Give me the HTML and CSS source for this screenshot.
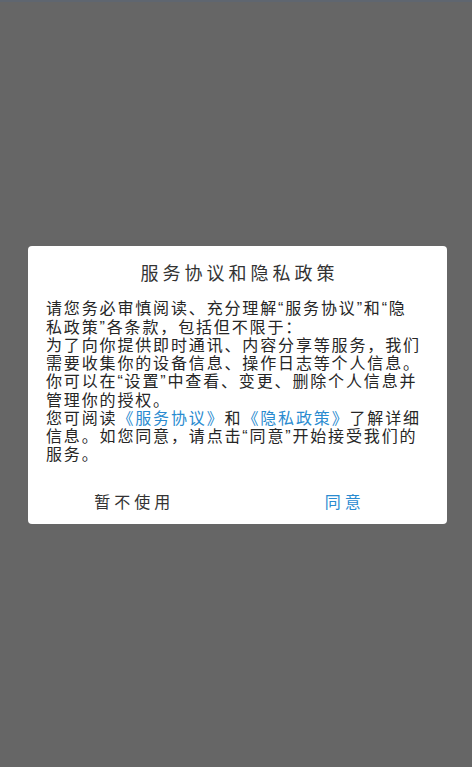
FILE: index.html
```html
<!DOCTYPE html>
<html lang="zh-CN">
<head>
<meta charset="utf-8">
<title>服务协议和隐私政策</title>
<link rel="stylesheet" href="styles.css">
</head>
<body>
<div class="screen">
  <div class="dialog">
    <div class="title">服务协议和隐私政策</div>
    <div class="content">请您务必审慎阅读、充分理解“服务协议”和“隐<br>私政策”各条款，包括但不限于：<br>为了向你提供即时通讯、内容分享等服务，我们<br>需要收集你的设备信息、操作日志等个人信息。<br>你可以在“设置”中查看、变更、删除个人信息并<br>管理你的授权。<br>您可阅读<span class="link">《服务协议》</span>和<span class="link">《隐私政策》</span>了解详细<br>信息。如您同意，请点击“同意”开始接受我们的<br>服务。</div>
    <div class="actions">
      <div class="btn btn-cancel">暂不使用</div>
      <div class="btn btn-ok">同意</div>
    </div>
  </div>
</div>
</body>
</html>
```
FILE: styles.css
```css
html, body {
  margin: 0;
  padding: 0;
  height: 100%;
  background: #666666;
}
body {
  font-family: "Liberation Sans", "Noto Sans CJK SC", sans-serif;
}
.screen {
  height: 100%;
  display: flex;
  align-items: center;
  justify-content: center;
  padding-left: 3px;
  box-sizing: border-box;
  border-top: 2px solid #5f6670;
}
.dialog {
  width: 419px;
  background: #ffffff;
  border-radius: 4px;
  margin-top: 1px;
}
.title {
  padding-top: 16px;
  padding-left: 4px;
  font-size: 18px;
  line-height: 24px;
  letter-spacing: 4px;
  color: #333333;
  text-align: center;
}
.content {
  margin-top: 14px;
  padding: 0 18px;
  font-size: 16px;
  line-height: 18.25px;
  letter-spacing: 1.85px;
  color: #262626;
  white-space: nowrap;
}
.link {
  color: #2a8bd0;
}
.actions {
  margin-top: 13px;
  height: 46px;
  display: flex;
}
.btn {
  flex: 1;
  display: flex;
  align-items: center;
  justify-content: center;
  font-size: 16px;
  letter-spacing: 4px;
  padding-left: 4px;
}
.btn-cancel {
  color: #333333;
}
.btn-ok {
  color: #2a8bd0;
  padding-left: 6px;
}
```
